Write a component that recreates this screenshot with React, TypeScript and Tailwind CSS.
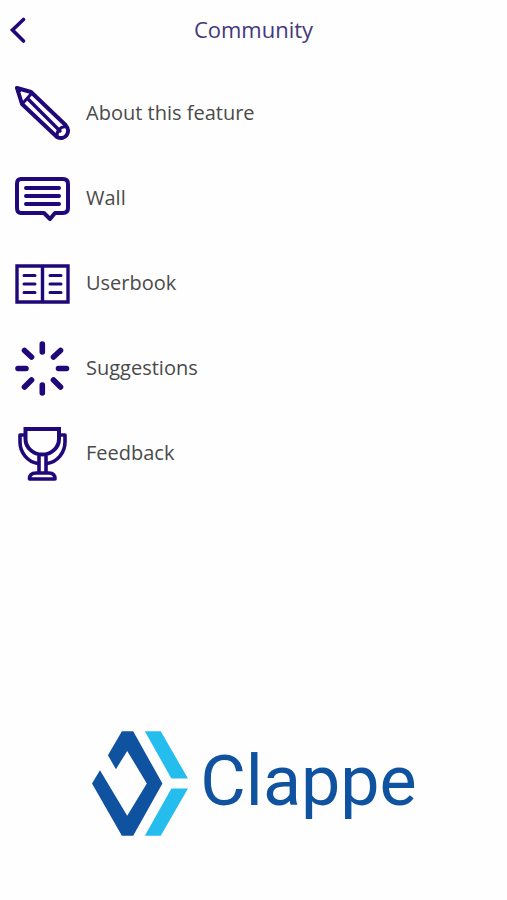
import React from "react";

interface MenuItem {
  label: string;
  icon: React.ReactNode;
}

const menuItems: MenuItem[] = [
  {
    label: "About this feature",
    icon: (
      <>
        <path d="M5 5 L19 9 L53.5 42 C60 49 53 58 45 54 L10 21 Z" />
        <path d="M20 10 L11 20" strokeWidth="3" />
        <path d="M16 16 L48 48" strokeWidth="3.4" />
        <path d="M54 44 C49 43 44 48 45 54" strokeWidth="3" />
        <path d="M4 4 L11 6 L6 11 Z" fill="currentColor" strokeWidth="1" />
      </>
    ),
  },
  {
    label: "Wall",
    icon: (
      <>
        <path d="M9 11 H51 Q56 11 56 16 V40 Q56 45 51 45 H43 L38 51 L32 45 H9 Q5 45 5 40 V16 Q5 11 9 11 Z" />
        <path d="M14 20 H47 M14 28 H47 M14 36 H47" />
      </>
    ),
  },
  {
    label: "Userbook",
    icon: (
      <>
        <path d="M5 13 H56 V49 H5 Z M30.5 13 V49" strokeWidth="3.4" strokeLinejoin="miter" />
        <path
          d="M12 22.5 H23 M12 31 H23 M12 39.5 H23 M38 22.5 H49 M38 31 H49 M38 39.5 H49"
          strokeWidth="3"
        />
      </>
    ),
  },
  {
    label: "Suggestions",
    icon: (
      <path
        d="M30.3 6 V14 M30.3 47 V55 M6 30.5 H14 M46.5 30.5 H54.5 M12.5 12.5 L19.5 19 M41.5 19 L48.5 12.5 M12.5 49 L19.5 42 M41.5 42 L48.5 49"
        strokeWidth="5.6"
      />
    ),
  },
  {
    label: "Feedback",
    icon: (
      <>
        <path d="M13.5 6 H47 V16 C47 25 39 31.5 30.3 31.5 S13.5 25 13.5 16 Z" strokeLinejoin="miter" />
        <path
          d="M13 12 H8 V19 C8 30 16 39 26 40.5 M48 12 H53 V19 C53 30 45 39 35 40.5"
          strokeWidth="3.6"
        />
        <path d="M27 33 V49 M34 33 V49" strokeWidth="3.6" />
        <path d="M17.5 56 C17.5 52 20 50 24 50 H37 C41 50 43 52 43 56 Z" strokeWidth="3.6" />
      </>
    ),
  },
];

const MenuRow: React.FC<MenuItem> = ({ label, icon }) => (
  <li>
    <a href="#" className="flex h-[85px] items-center gap-[14px] px-3">
      <svg
        viewBox="0 0 60 60"
        className="size-[60px] shrink-0 text-[#21087a]"
        fill="none"
        stroke="currentColor"
        strokeWidth="4"
        strokeLinecap="round"
        strokeLinejoin="round"
        aria-hidden="true"
      >
        {icon}
      </svg>
      <span className="text-[20px] leading-8 text-[#4a4a4a]">{label}</span>
    </a>
  </li>
);

const ClappeLogo: React.FC = () => (
  <div className="flex items-center justify-center gap-3 text-[#0f529f]">
    <svg viewBox="38 33 289 314" className="h-[105px] w-24 shrink-0" aria-hidden="true">
      <path
        d="M128 33 H162 L250 190 L162 347 H128 L38 190 L62 150 L144 287 L203 190 L144 92 L110 147 L86 105 Z"
        fill="currentColor"
      />
      <path d="M197 33 H245 L327 175 H277 Z M277 205 H327 L245 347 H197 Z" fill="#25bdee" />
    </svg>
    <span className="pb-1.5 font-[Roboto,sans-serif] text-[70px] leading-[92px]">Clappe</span>
  </div>
);

export default function App() {
  return (
    <div className="flex min-h-screen flex-col bg-[#fefefe] font-['Open_Sans',sans-serif]">
      <header className="grid h-[60px] grid-cols-[40px_1fr_40px] items-center">
        <button type="button" aria-label="Back" className="flex h-full items-center pl-2 text-[#21087a]">
          <svg viewBox="0 0 20 28" className="h-7 w-5" fill="none" stroke="currentColor" strokeWidth="3.6" strokeLinecap="round">
            <path d="M15.5 3.5 L4.5 14 L15.5 25" />
          </svg>
        </button>
        <h1 className="pb-0.5 text-center text-[22px] leading-8 text-[#43397d]">Community</h1>
      </header>
      <nav className="pt-2.5">
        <ul>
          {menuItems.map((item) => (
            <MenuRow key={item.label} {...item} />
          ))}
        </ul>
      </nav>
      <footer className="mt-auto pb-16 pl-0.5">
        <ClappeLogo />
      </footer>
    </div>
  );
}
